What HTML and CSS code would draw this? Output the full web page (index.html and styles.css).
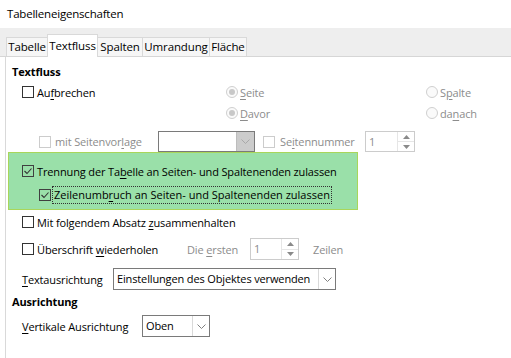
FILE: index.html
```html
<!DOCTYPE html>
<html lang="de">
<head>
<meta charset="utf-8">
<title>Tabelleneigenschaften</title>
<link rel="stylesheet" href="styles.css">
</head>
<body>
<div class="title">Tabelleneigenschaften</div>
<div class="tabbar">
  <div class="tab w41">Tabelle</div>
  <div class="tab active w51">Textfluss</div>
  <div class="tab w46">Spalten</div>
  <div class="tab w68">Umrandung</div>
  <div class="tab w38">Fläche</div>
</div>
<div class="panel">
  <div class="heading">Textfluss</div>

  <div class="row ind1">
    <div class="cell c204"><span class="cb"></span><span class="lbl">Au<u>f</u>brechen</span></div>
    <div class="cell c200 dis"><span class="rb sel"></span><span class="lbl"><u>S</u>eite</span></div>
    <div class="cell dis"><span class="rb"></span><span class="lbl">S<u>p</u>alte</span></div>
  </div>

  <div class="row ind1 mt1">
    <div class="cell c204"></div>
    <div class="cell c200 dis"><span class="rb sel"></span><span class="lbl"><u>D</u>avor</span></div>
    <div class="cell dis"><span class="rb"></span><span class="lbl">da<u>n</u>ach</span></div>
  </div>

  <div class="row ind2 h21 mt8">
    <div class="cell c119 dis"><span class="cb dcb"></span><span class="lbl l4">mit Seitenvor<u>l</u>age</span></div>
    <div class="combo dcombo c97">
      <span class="ctext"></span>
      <span class="cbtn gray"><svg width="9" height="5" viewBox="0 0 9 5"><polyline points="0.5,0.5 4.5,4.5 8.5,0.5" fill="none" stroke="#a8a8a8" stroke-width="1"/></svg></span>
    </div>
    <div class="cell c102 ml8 dis"><span class="cb dcb"></span><span class="lbl l5">Se<u>i</u>tennummer</span></div>
    <div class="spin c50">
      <span class="stext">1</span>
      <span class="sbtn">
        <span class="up"><svg width="7" height="4" viewBox="0 0 7 4"><polygon points="0,4 3.5,0 7,4" fill="#8a8a8a"/></svg></span>
        <span class="down"><svg width="7" height="4" viewBox="0 0 7 4"><polygon points="0,0 3.5,4 7,0" fill="#8a8a8a"/></svg></span>
      </span>
    </div>
  </div>

  <div class="highlight">
    <div class="row hrow1">
      <div class="cell"><span class="cb chk"><svg width="10" height="10" viewBox="0 0 10 10"><polyline points="1.5,5 4,7.5 8.5,2.5" fill="none" stroke="#333" stroke-width="1.1"/></svg></span><span class="lbl">Trennung der Ta<u>b</u>elle an Seiten- und Spaltenenden zulassen</span></div>
    </div>
    <div class="row hrow2">
      <div class="cell"><span class="cb chk"><svg width="10" height="10" viewBox="0 0 10 10"><polyline points="1.5,5 4,7.5 8.5,2.5" fill="none" stroke="#333" stroke-width="1.1"/></svg></span><span class="focus">Zeilenumb<u>r</u>uch an Seiten- und Spaltenenden zulassen</span></div>
    </div>
  </div>

  <div class="row ind1 mt2">
    <div class="cell"><span class="cb"></span><span class="lbl">Mit folgendem Absatz <u>z</u>usammenhalten</span></div>
  </div>

  <div class="row ind1 h22 mt6">
    <div class="cell c165"><span class="cb"></span><span class="lbl">Überschrift <u>w</u>iederholen</span></div>
    <div class="cell c63 dis"><span>Die <u>e</u>rsten</span></div>
    <div class="spin c49 h22s">
      <span class="stext">1</span>
      <span class="sbtn">
        <span class="up"><svg width="7" height="4" viewBox="0 0 7 4"><polygon points="0,4 3.5,0 7,4" fill="#8a8a8a"/></svg></span>
        <span class="down"><svg width="7" height="4" viewBox="0 0 7 4"><polygon points="0,0 3.5,4 7,0" fill="#8a8a8a"/></svg></span>
      </span>
    </div>
    <div class="cell ml14 dis"><span>Zeilen</span></div>
  </div>

  <div class="row ind1 h22 mt8">
    <div class="cell c91"><span><u>T</u>extausrichtung</span></div>
    <div class="combo c223">
      <span class="ctext">Einstellungen des Objektes verwenden</span>
      <span class="cbtn"><svg width="9" height="5" viewBox="0 0 9 5"><polyline points="0.5,0.5 4.5,4.5 8.5,0.5" fill="none" stroke="#808080" stroke-width="1"/></svg></span>
    </div>
  </div>

  <div class="heading mt2">Ausrichtung</div>

  <div class="row ind1 h22 mt3">
    <div class="cell c120"><span><u>V</u>ertikale Ausrichtung</span></div>
    <div class="combo c68">
      <span class="ctext">Oben</span>
      <span class="cbtn"><svg width="9" height="5" viewBox="0 0 9 5"><polyline points="0.5,0.5 4.5,4.5 8.5,0.5" fill="none" stroke="#808080" stroke-width="1"/></svg></span>
    </div>
  </div>
</div>
</body>
</html>
```
FILE: styles.css
```css
* { box-sizing: border-box; }
body {
  margin: 0;
  width: 511px;
  height: 358px;
  overflow: hidden;
  background: #fff;
  font-family: "Open Sans", "Noto Sans", sans-serif;
  font-size: 11px;
  letter-spacing: -0.14px;
  color: #000;
}
u { text-decoration: underline; text-underline-offset: 2px; }

.title {
  height: 28px;
  line-height: 27px;
  padding-left: 7px;
  font-size: 11.5px;
  letter-spacing: -0.2px;
}

.tabbar {
  height: 29px;
  background: #eeeeee;
  border-bottom: 1px solid #d6d6d6;
  display: flex;
  align-items: flex-end;
  padding-left: 6px;
}
.tab {
  height: 19px;
  border: 1px solid #d9d9d9;
  border-bottom: none;
  background: #f6f6f6;
  margin-right: -1px;
  text-align: center;
  line-height: 18px;
  font-size: 11.5px;
  white-space: nowrap;
}
.tab.active {
  height: 23px;
  background: #fff;
  margin-bottom: -1px;
  line-height: 22px;
  position: relative;
}
.w41 { width: 42px; }
.w51 { width: 51px; }
.w46 { width: 46px; }
.w68 { width: 68px; }
.w38 { width: 38px; }

.panel {
  margin-left: 5px;
  border-left: 1px solid #d9d9d9;
  height: 301px;
  padding-top: 5px;
}
.heading {
  height: 20px;
  line-height: 20px;
  padding-left: 6px;
  font-weight: bold;
}

.row {
  display: flex;
  align-items: center;
  height: 20px;
  white-space: nowrap;
}
.ind1 { padding-left: 16px; }
.ind2 { padding-left: 33px; }
.h21 { height: 21px; }
.h22 { height: 22px; }
.mt1 { margin-top: 1px; }
.mt2 { margin-top: 2px; }
.mt3 { margin-top: 3px; }
.mt6 { margin-top: 6px; }
.mt8 { margin-top: 8px; }
.ml8 { margin-left: 8px; }
.ml14 { margin-left: 14px; }

.cell {
  display: flex;
  align-items: center;
  flex: none;
}
.c204 { width: 204px; }
.c200 { width: 200px; }
.c119 { width: 119px; }
.c97 { width: 97px; }
.c102 { width: 102px; }
.c50 { width: 50px; }
.c49 { width: 49px; }
.c165 { width: 165px; }
.c63 { width: 63px; }
.c91 { width: 91px; }
.c223 { width: 223px; }
.c120 { width: 120px; }
.c68 { width: 68px; }

.dis { color: #8c8c8c; }

.cb {
  width: 12px;
  height: 12px;
  border: 1px solid #333;
  flex: none;
  display: flex;
  align-items: center;
  justify-content: center;
}
.cb.dcb { border-color: #cccccc; }
.lbl { margin-left: 3px; }
.lbl.l4 { margin-left: 4px; }
.lbl.l5 { margin-left: 5px; }

.rb {
  width: 12px;
  height: 12px;
  border: 1px solid #cfcfcf;
  border-radius: 50%;
  background: #fafafa;
  flex: none;
  display: flex;
  align-items: center;
  justify-content: center;
}
.rb.sel::after {
  content: "";
  width: 6px;
  height: 6px;
  border-radius: 50%;
  background: #c8c8c8;
}
.rb + .lbl { margin-left: 2px; }

.combo {
  height: 22px;
  border: 1px solid #7a7a7a;
  display: flex;
  flex: none;
  background: #fff;
}
.combo.dcombo { height: 21px; }
.ctext {
  flex: 1;
  padding-left: 3px;
  line-height: 20px;
  overflow: hidden;
}
.cbtn {
  width: 17px;
  border-left: 1px solid #d9d9d9;
  display: flex;
  align-items: center;
  justify-content: center;
  flex: none;
}
.cbtn.gray {
  width: 18px;
  background: #cccccc;
  border-left-color: #bdbdbd;
}

.spin {
  height: 21px;
  border: 1px solid #cccccc;
  display: flex;
  flex: none;
  background: #fff;
}
.spin.h22s { height: 22px; }
.stext {
  flex: 1;
  padding-left: 3px;
  color: #8c8c8c;
  line-height: 19px;
}
.sbtn {
  width: 17px;
  display: flex;
  flex-direction: column;
  border-left: 1px solid #e6e6e6;
}
.sbtn .up, .sbtn .down {
  flex: 1;
  display: flex;
  align-items: center;
  justify-content: center;
}
.sbtn .up { border-bottom: 1px solid #e6e6e6; }

.highlight {
  margin-left: 2px;
  width: 350px;
  height: 58px;
  background: #9ae0a9;
  border: 1px solid #a9d65a;
  padding-top: 8px;
}
.hrow1 { padding-left: 13px; }
.hrow2 { padding-left: 30px; margin-top: 4px; }
.cb.chk { border-color: #404040; }
.focus {
  margin-left: 1px;
  height: 18px;
  line-height: 16px;
  border: 1px dotted #333;
  padding: 0 1px;
  letter-spacing: 0;
}
```
